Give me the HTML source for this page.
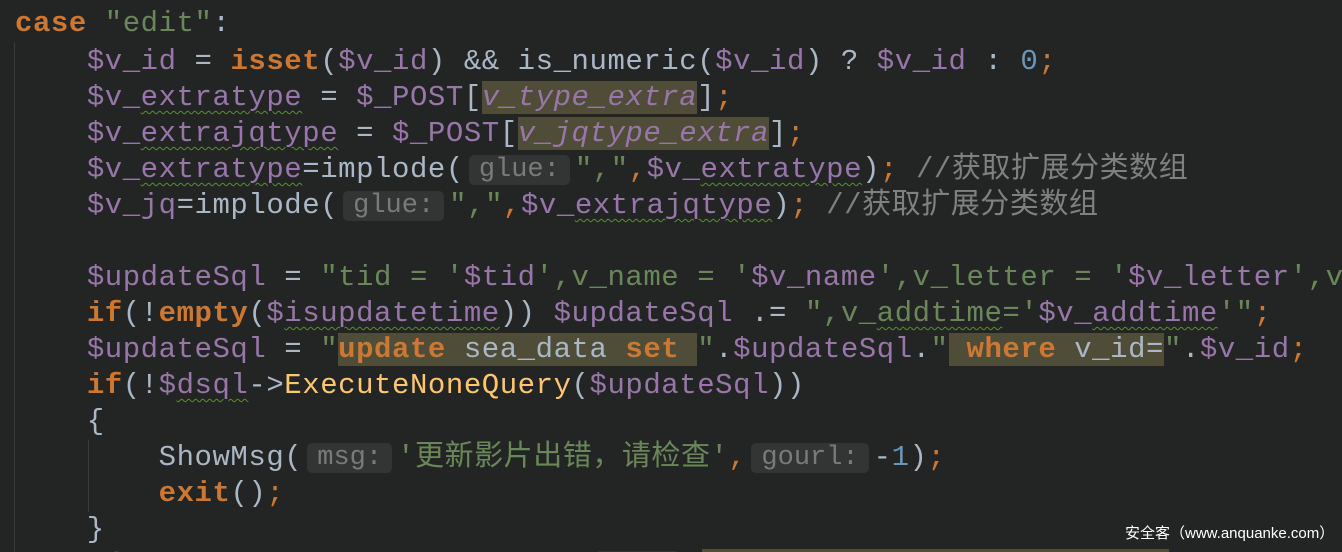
<!DOCTYPE html>
<html><head><meta charset="utf-8"><style>
html,body{margin:0;padding:0;background:#232525;width:1342px;height:552px;overflow:hidden}
.wrap{position:relative;width:1342px;height:552px;overflow:hidden}
.c{position:absolute;left:15px;top:2px;width:1327px;height:550px;overflow:hidden;font-family:"Liberation Mono","Noto Sans CJK SC",monospace;font-size:29px;letter-spacing:0.55px;color:#a9b7c6;white-space:pre}
.l{position:absolute;left:0;height:36px;line-height:36px}
.k{color:#cc7832;font-weight:bold}
.o{color:#cc7832}
.v{color:#9876aa}
.s{color:#6a8759}
.f{color:#ffc66d}
.n{color:#6897bb}
.i{font-style:italic;color:#9876aa}
.h{background:#4f4d38}
.w{text-decoration:underline wavy #5f8a3a;text-decoration-thickness:1px;text-underline-offset:5px}
.hint{display:inline-block;background:#333535;color:#7a7a7a;font-size:27px;border-radius:5px;height:30px;line-height:30px;vertical-align:1px;padding:0 10px;margin:0 5px;letter-spacing:0}
.g{position:absolute;width:1px;background:#393b3b}
.wm{position:absolute;left:1125px;top:522px;font-family:"Liberation Sans","Noto Sans CJK SC",sans-serif;font-size:15px;color:#fff}
</style></head><body><div class="wrap">
<div class="g" style="left:14px;top:42px;height:510px"></div>
<div class="g" style="left:88px;top:440px;height:72px"></div>
<div class="c">
<div class="l" style="top:-32px">    <span class="o">;</span></div>
<div class="l" style="top:4px"><span class="k">case</span> <span class="s">"edit"</span>:</div>
<div class="l" style="top:42px">    <span class="v">$v_id</span> = <span class="k">isset</span>(<span class="v">$v_id</span>) &amp;&amp; is_numeric(<span class="v">$v_id</span>) ? <span class="v">$v_id</span> : <span class="n">0</span><span class="o">;</span></div>
<div class="l" style="top:78px">    <span class="v">$v_<span class="w">extratype</span></span> = <span class="v">$_POST</span>[<span class="i h">v_type_extra</span>]<span class="o">;</span></div>
<div class="l" style="top:114px">    <span class="v">$v_<span class="w">extrajqtype</span></span> = <span class="v">$_POST</span>[<span class="i h">v_jqtype_extra</span>]<span class="o">;</span></div>
<div class="l" style="top:150px">    <span class="v">$v_<span class="w">extratype</span></span>=implode(<span class="hint">glue:</span><span class="s">","</span><span class="o">,</span><span class="v">$v_<span class="w">extratype</span></span>)<span class="o">;</span> <span style="color:#808080">//获取扩展分类数组</span></div>
<div class="l" style="top:186px">    <span class="v">$v_jq</span>=implode(<span class="hint">glue:</span><span class="s">","</span><span class="o">,</span><span class="v">$v_<span class="w">extrajqtype</span></span>)<span class="o">;</span> <span style="color:#808080">//获取扩展分类数组</span></div>
<div class="l" style="top:258px">    <span class="v">$updateSql</span> = <span class="s">"tid = '</span><span class="v">$tid</span><span class="s">',v_name = '</span><span class="v">$v_name</span><span class="s">',v_letter = '</span><span class="v">$v_letter</span><span class="s">',v</span></div>
<div class="l" style="top:294px">    <span class="k">if</span>(!<span class="k">empty</span>(<span class="v">$<span class="w">isupdatetime</span></span>)) <span class="v">$updateSql</span> .= <span class="s">",v_<span class="w">addtime</span>='</span><span class="v">$v_<span class="w">addtime</span></span><span class="s">'"</span><span class="o">;</span></div>
<div class="l" style="top:330px">    <span class="v">$updateSql</span> = <span class="s">"</span><span class="h"><span class="k">update</span> sea_data <span class="k">set</span> </span><span class="s">"</span>.<span class="v">$updateSql</span>.<span class="s">"</span><span class="h"> <span class="k">where</span> v_id=</span><span class="s">"</span>.<span class="v">$v_id</span><span class="o">;</span></div>
<div class="l" style="top:366px">    <span class="k">if</span>(!<span class="v">$<span class="w">dsql</span></span>-&gt;<span class="f">ExecuteNoneQuery</span>(<span class="v">$updateSql</span>))</div>
<div class="l" style="top:402px">    {</div>
<div class="l" style="top:438px">        ShowMsg(<span class="hint">msg:</span><span class="s">'更新影片出错，请检查'</span><span class="o">,</span><span class="hint">gourl:</span>-<span class="n">1</span>)<span class="o">;</span></div>
<div class="l" style="top:474px">        <span class="k">exit</span>()<span class="o">;</span></div>
<div class="l" style="top:510px">    }</div>
<div class="l" style="top:546px">    <span class="k">if</span>(!<span class="v">$dsql</span>-&gt;<span class="f">ExecuteNoneQuery</span>(<span class="hint">sql:</span><span class="s">"</span><span class="h"><span class="k">update</span> sea_data <span class="k">set</span> v_hit=</span><span class="s">"</span></div>
</div>
<div class="wm">安全客（www.anquanke.com）</div>
</div></body></html>
